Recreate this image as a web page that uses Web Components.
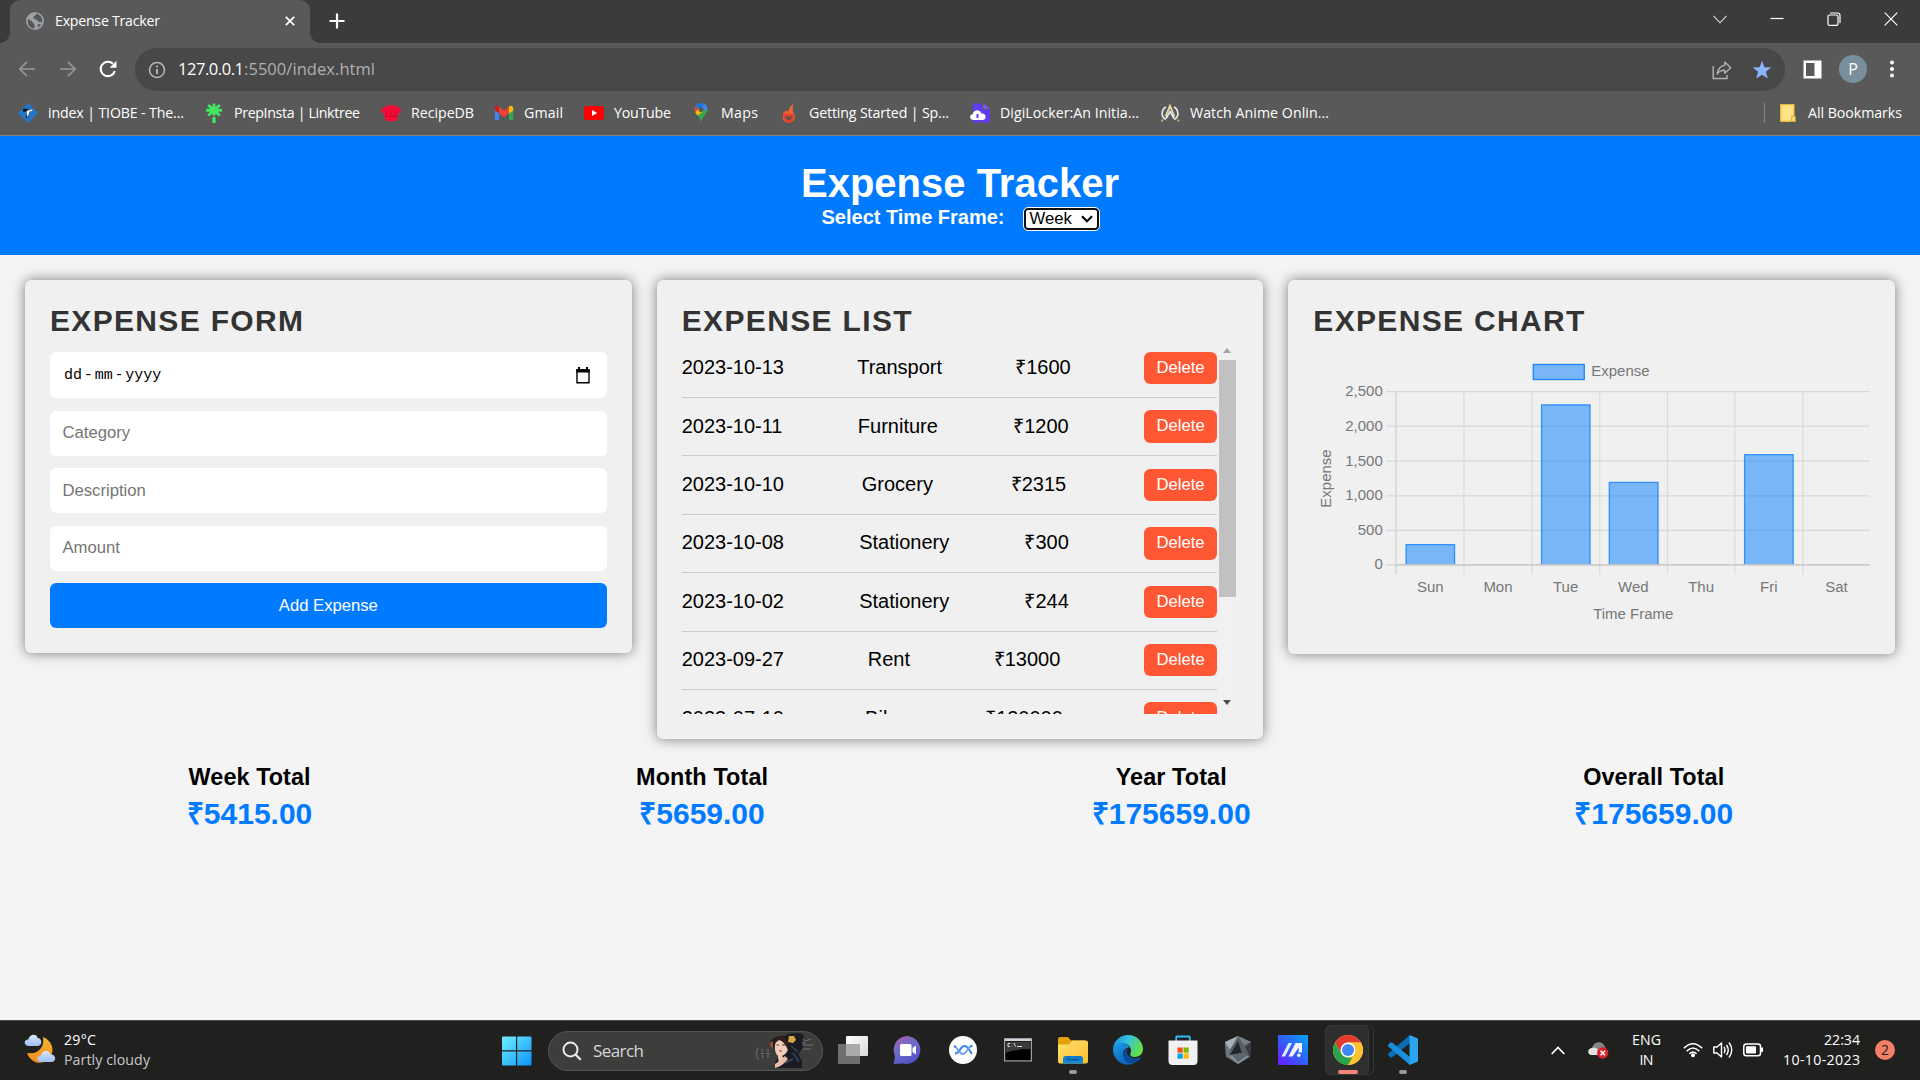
<!DOCTYPE html>
<html lang="en">
<head>
<meta charset="utf-8">
<title>Expense Tracker</title>
<style>
html,body{margin:0;padding:0;width:1920px;height:1080px;overflow:hidden}
</style>
</head>
<body>
<desktop-screen></desktop-screen>
<script>
const ICONS = {
globe:['0 0 18 18',`<circle cx="9" cy="9" r="9" fill="#9aa0a6"/><path d="M2 6.5 C3.500 9 6 8 6.500 10 C7 11.500 8.500 11.500 8.500 13.500 L8.500 16.500 C4 16.500 1 12.500 2 6.500Z M10.500 1.800 C10 4 7.500 3.800 7.500 5.500 C7.500 7.500 11.500 7.500 12 9 C12.500 10.500 15 9.500 16.200 10.500 C16.500 5.500 14 2.500 10.500 1.800Z M13 12 C11.500 12.500 11.500 14 12 15.300 C13.500 14.500 14.500 13.500 15 12.300Z" fill="#555"/>`],
x:['0 0 10 10',`<path d="M.8.8 9.200 9.200M9.200.8.8 9.200" stroke="#fff" stroke-width="1.700"/>`],
plus:['0 0 16 16',`<path d="M8 .5V15.500M.5 8H15.500" stroke="#fff" stroke-width="2.200"/>`],
chevThin:['0 0 14 9',`<path d="M.5.8 7 7.800 13.500.8" fill="none" stroke="#ddd" stroke-width="1.100"/>`],
min:['0 0 14 14',`<path d="M.5 6.500H13.500" stroke="#fff" stroke-width="1.200"/>`],
restore:['0 0 14 14',`<rect x="1" y="3" width="10" height="10.300" rx="1.600" fill="none" stroke="#fff" stroke-width="1.200"/><path d="M3 1 H10.500 Q13 1 13 3.500 V11" fill="none" stroke="#fff" stroke-width="1.200"/>`],
closeW:['0 0 14 14',`<path d="M.7.7 13.300 13.300M13.300.7.7 13.300" stroke="#fff" stroke-width="1.200"/>`],
back:['0 0 18 18',`<path d="M17 9H2M9 1.800 1.800 9 9 16.200" fill="none" stroke="#969696" stroke-width="1.700"/>`],
fwd:['0 0 18 18',`<path d="M1 9H16M9 1.800 16.200 9 9 16.200" fill="none" stroke="#969696" stroke-width="1.700"/>`],
reload:['0 0 18 18',`<path d="M15.800 11.200A7.200 7.200 0 1 1 14 3.800" fill="none" stroke="#fff" stroke-width="2.100"/><path d="M17.500.8V7.700H10.600Z" fill="#fff"/>`],
info:['0 0 18 18',`<circle cx="9" cy="9" r="7.500" fill="none" stroke="#b4b8bc" stroke-width="1.600"/><path d="M9 8V13" stroke="#b4b8bc" stroke-width="1.900"/><circle cx="9" cy="5.500" r="1.100" fill="#b4b8bc"/>`],
share:['0 0 20 20',`<path d="M1.200 6V18.500H15V15" fill="none" stroke="#b0b0b0" stroke-width="1.500"/><path d="M12.800 2 18.800 7.800 12.800 13.300V10.300C9.500 10.300 7.300 11 5 14C5.800 9.500 8.500 6 12.800 5.300Z" fill="none" stroke="#b0b0b0" stroke-width="1.400" stroke-linejoin="round"/>`],
star:['0 0 20 20',`<path d="M10 .8 12.400 7.200 19.300 7.500 13.900 11.800 15.800 18.500 10 14.700 4.200 18.500 6.100 11.800.7 7.500 7.600 7.200Z" fill="#8ab4f8"/>`],
panel:['0 0 19 19',`<path fill-rule="evenodd" d="M.5.500H18.500V18.500H.5Z M3 3V16H11.500V3Z" fill="#fff"/>`],
dots:['0 0 6 18',`<circle cx="3" cy="2.500" r="2" fill="#fff"/><circle cx="3" cy="9" r="2" fill="#fff"/><circle cx="3" cy="15.500" r="2" fill="#fff"/>`],
tiobe:['0 0 20 20',`<path d="M10 0 19.800 10 10 20 .2 10Z" fill="#2277cc"/><path d="M5 6 8 5.500 11 7 14.500 5.500 14 7.500 11.500 8.500 10.500 14 8 15 9 9 5 8.500Z" fill="#111"/><path d="M8.500 8 14.500 6 14 8 11.500 8.500 9.800 14.500 9 12Z" fill="#fff"/>`],
linktree:['0 0 20 20',`<path d="M10 .5V12.500M2 7.200H18M4.200 2 15.800 12.500M15.800 2 4.200 12.500" stroke="#43e660" stroke-width="2.900"/><path d="M10 14V20" stroke="#43e660" stroke-width="3.200"/>`],
recipe:['0 0 20 20',`<path d="M3 11C-1 9-.5 4.500 3.500 4.500C5 2 8 1.800 9.500 3C12 1.200 15.500 2.200 16.500 4.200C20.500 4.500 21 9.500 17 11V13H3Z M4 12.800H16.500V17C13 18.700 8 18.700 4 17Z" fill="#f40b35"/><path d="M5.500 9V13M10 8.500V13M14.500 9V13M4 13.500H16.500" stroke="#b30024" stroke-width=".6"/>`],
gmail:['0 0 20 20',`<path d="M.8 4.500V16Q.8 17 1.800 17H5V8Z" fill="#4285f4"/><path d="M19.200 4.500V16Q19.200 17 18.200 17H15V8Z" fill="#34a853"/><path d="M.8 7.500V5C.8 3 3 2 4.700 3.300L5 3.500V10.300Z" fill="#c5221f"/><path d="M15 3.500C17 1.800 19.200 3 19.200 5V7.500L15 10.600Z" fill="#fbbc04"/><path d="M5 3.500 10 7.400 15 3.500V10.600L10 14.300 5 10.600Z" fill="#ea4335"/>`],
youtube:['0 0 20 20',`<rect x="0" y="3" width="20" height="14" rx="3" fill="#f00"/><path d="M8 7 13.200 10 8 13Z" fill="#fff"/>`],
maps:['0 0 20 20',`<path d="M10 .3C13.800.3 16.500 3 16.500 6.600C16.500 11 11 13 10 19.700C9 13 3.500 11 3.500 6.600C3.500 3 6.200.3 10 .3Z" fill="#34a853"/><path d="M4.800 3 L8 6.500 4.300 9.300C3 7 3.500 4.500 4.800 3Z" fill="#ea4335"/><path d="M4.800 3C7 0 11 -.3 13.300 1.200L8 7Z" fill="#1a73e8"/><path d="M13.300 1.200C15.500 2.500 16.500 4.500 16.500 6.700L11.500 7 9 5.500Z" fill="#4285f4"/><path d="M4.300 9.300 8.300 5 12 8.500 6.500 12.500C5.500 11.500 4.700 10.300 4.300 9.300Z" fill="#fbbc04"/><circle cx="10" cy="6.500" r="2.500" fill="#5b5b5b"/>`],
flame:['0 0 20 20',`<path d="M14.500 .5C9.800 4 10.500 7 9 8.500C8 8.800 7.500 8 7.300 7C6.500 8.500 4.500 8.500 4 12C3.500 15.500 4 19.500 9.500 19.600C15.500 19.600 16.500 15 15.500 12C13.500 9 13 6 14.500 .5Z" fill="#f4642d"/><path d="M4 11.500C7 10 13 10 15.700 12.500L14 17.500C12 20.500 7.500 20.500 5.200 17Z" fill="#e5422f"/><path d="M6.200 13Q10 14.500 13.200 13Q12.500 17.500 9.500 16.800Q6.500 16.500 6.200 13Z" fill="#59514c"/>`],
digi:['0 0 20 20',`<path d="M3 .5H12V6.500H20V19.500H3Z" fill="#613cf2"/><path d="M13.200.5 20 5.700H13.200Z" fill="#7b5cf7"/><path d="M3.500 17C-1 17-.8 11.500 2.800 11C3.500 6.500 10 6 11.500 10.500C16.500 10 17 17 12.500 17Z" fill="#fff"/><path d="M7.500 11V15" stroke="#613cf2" stroke-width="2"/>`],
anime:['0 0 20 20',`<path d="M5.800 16.500C1 14 .8 7 6 4M14.200 16.500C19 14 19.200 7 14 4" fill="none" stroke="#e8e8e8" stroke-width="1.700"/><path d="M5.500 13.500 10 3 14.500 13.500" fill="none" stroke="#e8dba8" stroke-width="1.900"/><path d="M6 15.500 10 8.500 14 15.500" fill="none" stroke="#eee" stroke-width="1.600"/><path d="M1 16.500H3V18.500H1ZM17.300 16.500H19.300V18.500H17.300Z" fill="#cfae62"/>`],
folderY:['0 0 16 18',`<path d="M.6.600H14V13L15.300 17.400H.6Z" fill="#ffe389" stroke="#e5bb3a" stroke-width="1.200"/><path d="M11.800 12.200H15.200V17.400H11.800Z" fill="#ffe389" stroke="#d6a727"/>`],
calendar:['0 0 14 17',`<path d="M1 3H13V15.700H1Z" fill="none" stroke="#000" stroke-width="1.400"/><path d="M.3 2.200H13.700V5.500H.3ZM2 0H4V3H2ZM10 0H12V3H10Z"/>`],
weather:['0 0 32 32',`<defs><linearGradient id="m" x2="0" y2="1"><stop stop-color="#f2b92f"/><stop offset="1" stop-color="#f68a1e"/></linearGradient><linearGradient id="c" x2="0" y2="1"><stop stop-color="#d9e7fb"/><stop offset="1" stop-color="#9dbdf2"/></linearGradient></defs><path d="M19 4C31 9 32 24 20 29C13 31.500 6 28 3 20C13 22 21 15 19 4Z" fill="url(#m)"/><path d="M4 13C-1 12 0 6 4.500 6.500C5 1 13 0 13.500 5C18.500 5 18.500 12.500 14 13Z" fill="url(#c)"/><path d="M17 29C11.500 28.500 12.500 22.500 17 22.500C18 16.500 25.500 16.500 26.500 21.500C32 21 33 28.500 27.500 29Z" fill="url(#c)"/>`],
win:['0 0 30 30',`<defs><linearGradient id="w" x2="1" y2="1"><stop stop-color="#70efff"/><stop offset="1" stop-color="#0a93fb"/></linearGradient></defs><path d="M0 1.500Q0 .5 1 .5H14V14.300H0ZM15.200.500H28.500Q29.500.5 29.500 1.500V14.300H15.200ZM0 15.500H14V29.500H1Q0 29.500 0 28.500ZM15.200 15.500H29.500V28.500Q29.500 29.500 28.500 29.500H15.200Z" fill="url(#w)"/>`],
search:['0 0 20 20',`<circle cx="8.500" cy="8.500" r="7" fill="none" stroke="#ececf2" stroke-width="1.900"/><path d="M13.500 13.500 18.700 18.800" stroke="#ececf2" stroke-width="2.200"/>`],
portrait:['0 0 64 38',`<g fill="none" stroke="#777" stroke-width=".9"><path d="M8 16Q6 16 6 19Q6 22 4.500 22Q6 22 6 25Q6 27 8 27M11 17V20M10 21.500H13M11.500 23V26M17 17V20M15 21.500H19M17 23V26M51 11H55M50 9 52 7 54 9 60 7M50 13H62M51 17H60"/></g><path d="M19 10C21 6 26 4 34 4C40 0 52 0 53 4L51 10 52 16 47 22 51 29 51 36H24V30L28 24 24 18Z" fill="#1b1b23"/><path d="M25 9Q30 4 35 9L37 17Q36 22 31 24L34 28 28 33 27 24Q23 20 24 13Z" fill="#f1cdb8"/><path d="M24 32Q29 29 34 24L37 27Q32 34 24 36Z" fill="#e5bdab"/><path d="M23 12Q24 4 32 5Q39 8 37 18Q33 9 28 8Z" fill="#32211b"/><path d="M19 11 22 9 22 15 20 16Z" fill="#a8502e"/><path d="M38 4 43 4 45 8 42 11 37 10Z" fill="#d9a63f"/><path d="M40 14 47 20M42 21 48 30M34 31 42 27" stroke="#34475f" stroke-width="1.500"/><path d="M25.500 13H28M31 13H34" stroke="#59332a"/><path d="M28 19H31" stroke="#b44d43" stroke-width="1.200"/>`],
taskview:['0 0 30 28',`<defs><linearGradient id="tv" x2="1" y2="1"><stop stop-color="#fff"/><stop offset="1" stop-color="#d9d9d9"/></linearGradient></defs><rect x="8" y="0" width="22" height="20" rx="1" fill="url(#tv)"/><rect x="0" y="8" width="22" height="20" rx="1" fill="#7e7e7e" opacity=".85"/><rect x="8" y="8" width="14" height="12" fill="#aaa"/>`],
chat:['0 0 30 30',`<defs><linearGradient id="ch" x1=".2" x2=".7" y2="1"><stop stop-color="#a25fae"/><stop offset=".45" stop-color="#6a6dcc"/><stop offset="1" stop-color="#514dc5"/></linearGradient></defs><path d="M15 1A14 14 0 1 1 10 28.500L.8 29 2 21A14 14 0 0 1 15 1Z" fill="url(#ch)"/><rect x="7" y="9" width="11.500" height="12" rx="1.500" fill="#fff"/><path d="M19.500 13 23 10.500V19.500L19.500 17Z" fill="#fff"/>`],
wave:['0 0 28 28',`<circle cx="14" cy="14" r="14" fill="#fff"/><path d="M6 17.500C11 17.500 11 10 15.500 10C18.500 10 19.500 13 23 18" fill="none" stroke="#3c83f2" stroke-width="2"/><path d="M5.500 10.500C9 11.500 10 18 14 18C18 18 18 11 22.500 10" fill="none" stroke="#6aa0f7" stroke-width="1.800"/><circle cx="6" cy="10.500" r="1.200" fill="#3c83f2"/><circle cx="22.500" cy="10" r="1.200" fill="#3c83f2"/>`],
terminal:['0 0 28 24',`<rect x=".6" y=".6" width="26.800" height="22.300" fill="#000" stroke="#9aa1a8" stroke-width="1.200"/><path d="M1 1H27V3H1Z" fill="#d0d4d8"/><path d="M1.500 3.500H26.500V11Q12 11 1.500 15Z" fill="#3a3a3a"/><path d="M6 5.500H4V8.500H6M8 5.500V6M8 8V8.500M10 5 11.500 8.500M13 8.500H18" stroke="#ddd" stroke-width="1" fill="none"/>`],
folder:['0 0 30 30',`<defs><linearGradient id="fo" x2="1" y2="1"><stop stop-color="#ffe06f"/><stop offset="1" stop-color="#fbc02c"/></linearGradient><linearGradient id="fb" x2="0" y2="1"><stop stop-color="#0b74c5"/><stop offset="1" stop-color="#0f93dc"/></linearGradient></defs><path d="M0 4Q0 2 2 2H10L13 5.500H27V12H0Z" fill="#e3a008"/><path d="M0 9.500H11L14 5.500H28Q30 5.500 30 7.500V26.500Q30 28.500 28 28.500H2Q0 28.500 0 26.500Z" fill="url(#fo)"/><path d="M5 28.500V24Q5 21 8 21H22Q25 21 25 24V28.500Z" fill="url(#fb)"/><path d="M9 24.700H21.500" stroke="#0b4f8e" stroke-width="1.300"/>`],
edge:['0 0 30 30',`<defs><linearGradient id="e1" x2="1" y2=".4"><stop stop-color="#1687d0"/><stop offset=".5" stop-color="#35c1df"/><stop offset="1" stop-color="#60e04b"/></linearGradient><linearGradient id="e2" x2=".5" y2="1"><stop stop-color="#1c9de4"/><stop offset="1" stop-color="#0c62bb"/></linearGradient></defs><path d="M0 13A15 15 0 0 1 15 0C25 0 30 8 30 14C30 19 26 22 21.500 22C18 22 16.500 20 17.500 18.500C19.500 14 16 8 9 8C5 8 2 10 0 13Z" fill="url(#e1)"/><path d="M0 15C0 8 7 6.500 11 8C15 9.500 17 12 15 13C11 13 9 18 11 22C13 27 18 29 22 28A15 15 0 0 1 0 15Z" fill="url(#e2)"/><path d="M14.500 13C10 15 9 21 13 25.500C17 29.500 22 28.500 25 26.200C27 24.500 28.500 22.500 28 22C27.500 21.500 25 24 20 23C14 21.500 13 17 14.500 13Z" fill="#0b4c96"/>`],
store:['0 0 30 30',`<path d="M8.200 6.500V2.300Q8.200 1.500 9 1.500H21Q21.800 1.500 21.800 2.300V6.500" fill="none" stroke="#35bdf3" stroke-width="1.800"/><path d="M.5 5.500H29.500V26Q29.500 30 25.500 30H4.500Q.5 30 .5 26Z" fill="#f1f1f1"/><path d="M9.500 12.500H14.700V17.700H9.500Z" fill="#f25022"/><path d="M15.500 12.500H20.700V17.700H15.500Z" fill="#7fba00"/><path d="M9.500 18.500H14.700V23.700H9.500Z" fill="#00a4ef"/><path d="M15.500 18.500H20.700V23.700H15.500Z" fill="#ffb900"/>`],
hex:['0 0 28 30',`<path d="M14 1 27 7 26 22 14 29 2 22 1 7Z" fill="#59636b"/><path d="M14 1 10 8 3 19 1 7Z" fill="#a9b0b5"/><path d="M14 1 27 7 20 10Z" fill="#777f87"/><path d="M1 7 6 15 4 22 2 22Z" fill="#6e777f"/><path d="M14 6 6 20 18 18Z" fill="#22272a"/><path d="M14 3 25 21 18 18Z" fill="#555e66"/><path d="M4 21 18 18 25 21.500 14 29Z" fill="#8a939a"/><path d="M8 20.500 18 18 23 20.500 14 27Z" fill="#5b646b"/><path d="M27 7 26 22 21 12Z" fill="#343b41"/>`],
armoury:['0 0 30 30',`<defs><linearGradient id="ar" x1="1" x2="0" y2="1"><stop stop-color="#00a6ff"/><stop offset=".5" stop-color="#3260fa"/><stop offset="1" stop-color="#6b17ff"/></linearGradient></defs><path d="M0 0H30V30H0Z" fill="url(#ar)"/><path d="M3.500 21.500 10.500 8H14L7 21.500Z" fill="#dfe8ff"/><path d="M10.500 21.500 17.500 8H24V17.500L20.700 17.500V12.500L14.500 21.500Z" fill="#f2f5ff"/><circle cx="20.800" cy="20.200" r="1.700" fill="#fff"/>`],
chrome:['0 0 30 30',`<circle cx="15" cy="15" r="15" fill="#fcc934"/><path d="M2.010 7.500A15 15 0 0 1 27.990 7.500H15L8.500 18.750Z" fill="#e33b2e"/><path d="M2.010 7.500 8.500 18.750 15 22.500H21.500L15 30A15 15 0 0 1 2.010 7.500Z" fill="#2ba24c"/><path d="M21.500 18.750 15 30A15 15 0 0 0 27.990 7.500H15Z" fill="#fcc32c"/><circle cx="15" cy="15" r="7.500" fill="#fff"/><circle cx="15" cy="15" r="6" fill="#4285f4"/>`],
vscode:['0 0 30 30',`<path d="M22 0 22 8 4 22.500 2.500 22.500 0 20 0 18.800Z" fill="#0a6fb8"/><path d="M22 30V22L4 7.500H2.500L0 10V11.200Z" fill="#1b8fdb"/><path d="M21.500 0 30 3.500V26.500L21.500 30Z" fill="#2aa5ee"/>`],
up:['0 0 14 9',`<path d="M.7 8 7 1.500 13.300 8" fill="none" stroke="#fff" stroke-width="1.700"/>`],
cloud:['0 0 21 18',`<path d="M4 14C-1 14-1 7.500 4 7C6-.5 15 0 16.500 5Q18 7 17 10L10 14Z" fill="#858585"/><path d="M4 14C-1 14-1 7.500 4 7Q8 5 11 10L12 14Z" fill="#e4e4e4"/><circle cx="14.700" cy="12" r="5.700" fill="#d9242d"/><path d="M12.500 9.800 17 14.200M17 9.800 12.500 14.200" stroke="#fff" stroke-width="1.500"/>`],
wifi:['0 0 20 16',`<g fill="none" stroke="#fff" stroke-width="1.500"><path d="M.8 6.300Q10-3 19.200 6.300M3.600 9.200Q10 2.600 16.400 9.200M6.400 11.800Q10 8 13.600 11.800"/></g><circle cx="10" cy="13.200" r="2" fill="#fff"/>`],
speaker:['0 0 20 18',`<g fill="none" stroke="#fff" stroke-width="1.400"><path d="M.8 6H4L8.500 2V16L4 12H.8Z" stroke-linejoin="round"/><path d="M11 6Q13 9 11 12M13.500 4Q17 9 13.500 14M16 1.500Q21.500 9 16 16.500"/></g>`],
battery:['0 0 20 14',`<rect x=".8" y="1" width="16.700" height="11.700" rx="2.500" fill="none" stroke="#fff" stroke-width="1.500"/><rect x="3" y="3.300" width="10" height="7.200" rx=".8" fill="#fff"/><path d="M18 4.500H20V9H18Z" fill="#fff"/>`],
down:['0 0 12 8',`<path d="M1 1.200 6 6.200 11 1.200" fill="none" stroke="#000" stroke-width="2.200"/>`]
};

/* define a component from its shadow markup */
function component(name, markup, setup){
  const t=document.createElement('template'); t.innerHTML=markup;
  customElements.define(name, class extends HTMLElement{
    connectedCallback(){
      if(this.shadowRoot) return;
      this.attachShadow({mode:'open'}).append(t.content.cloneNode(true));
      if(setup) setup.call(this,this.shadowRoot);
    }
  });
}

customElements.define('ui-icon', class extends HTMLElement{
  connectedCallback(){
    if(this.shadowRoot) return;
    const [vb,body]=ICONS[this.getAttribute('name')], [,,w,h]=vb.split(' ');
    this.attachShadow({mode:'open'}).innerHTML=
      `<style>:host{display:block;flex:none;width:${w}px;height:${h}px}svg{display:block}</style><svg width="${w}" height="${h}" viewBox="${vb}">${body}</svg>`;
  }
});

/* single line of text tracked to an exact advance width */
customElements.define('fit-text', class extends HTMLElement{
  connectedCallback(){
    if(this.shadowRoot) return;
    const w=+this.getAttribute('w');
    this.attachShadow({mode:'open'}).innerHTML=
      `<style>:host{display:block;flex:none;width:${w}px;white-space:nowrap}span{display:inline-block}</style><span><slot></slot></span>`;
    const s=this.shadowRoot.querySelector('span');
    const n=this.textContent.length, nat=s.getBoundingClientRect().width;
    if(nat) s.style.letterSpacing=((w-nat)/(n-1)).toFixed(3)+'px';
  }
});

component('browser-tabs',`<style>
:host{display:flex;height:43px;background:#3b3b3b;align-items:flex-start;color:#fff;font:14.200px/20px "Open Sans",sans-serif}
.tab{box-sizing:border-box;width:300px;height:43px;margin-left:10px;background:#595959;border-radius:10px 10px 0 0;display:flex;padding:12px 15px 0 16px;position:relative}
.tab::before,.tab::after{content:"";position:absolute;bottom:0;width:10px;height:10px}
.tab::before{left:-10px;background:radial-gradient(circle at 0 0,#3b3b3b 9.500px,#595959 10px)}
.tab::after{right:-10px;background:radial-gradient(circle at 100% 0,#3b3b3b 9.500px,#595959 10px)}
fit-text{margin:-1px 0 0 11px}.tab .c{margin:4px 0 0 auto}
.plus{margin:13px 0 0 19px}.win{display:flex;margin:12px 22px 0 auto;gap:43px;align-items:center;height:14px}
</style><div class="tab"><ui-icon name="globe"></ui-icon><fit-text w="105">Expense Tracker</fit-text><ui-icon class="c" name="x"></ui-icon></div><ui-icon class="plus" name="plus"></ui-icon>
<div class="win"><ui-icon name="chevThin"></ui-icon><ui-icon name="min"></ui-icon><ui-icon name="restore"></ui-icon><ui-icon name="closeW"></ui-icon></div>`);

component('address-bar',`<style>
:host{display:flex;height:53px;background:#595959;align-items:center;box-sizing:border-box;padding:0 24px 0 18px;font:16.500px/24px "Open Sans",sans-serif}
.nav{display:flex;gap:22.500px;width:117px;margin-top:-1px}
.box{display:flex;align-items:center;width:1650px;height:43px;border-radius:22px;background:#484848;box-sizing:border-box;padding:0 13px 0 13px;color:#fff}
.box fit-text{margin-top:-1px}
.box .i{margin-right:12px}.g{color:#b0b0b0}
.s{margin:0 20px 0 auto}.p{margin:-1px 17px 0 18px}
.av{width:28px;height:28px;border-radius:50%;background:#78909c;color:#fff;text-align:center;font:16px/28px "Open Sans",sans-serif;margin:-1px 22px 0 0}
.k{margin-top:-1px}
</style><div class="nav"><ui-icon name="back"></ui-icon><ui-icon name="fwd"></ui-icon><ui-icon name="reload"></ui-icon></div>
<div class="box"><ui-icon class="i" name="info"></ui-icon><fit-text w="66">127.0.0.1</fit-text><fit-text class="g" w="131">:5500/index.html</fit-text><ui-icon class="s" name="share"></ui-icon><ui-icon name="star"></ui-icon></div>
<ui-icon class="p" name="panel"></ui-icon><div class="av">P</div><ui-icon class="k" name="dots"></ui-icon>`);

component('book-mark',`<style>:host{display:flex;align-items:center;flex:none;gap:10px}</style><slot></slot>`,function(r){
  const i=document.createElement('ui-icon');
  i.setAttribute('name',this.getAttribute('icon'));
  r.querySelector('slot').before(i);
  this.style.width=this.getAttribute('w')+'px';
});
component('bookmarks-bar',`<style>
:host{display:flex;height:40px;background:#595959;border-bottom:1px solid #858585;box-sizing:border-box;padding:0 18px 6px 18px;align-items:center;color:#fff;font:14.200px/20px "Open Sans",sans-serif}
.sep{width:1px;height:20px;background:#858585;margin-left:auto}.f{margin:0 12px 0 15px}
</style><book-mark icon="tiobe" w="186"><fit-text w="136">index | TIOBE - The...</fit-text></book-mark><book-mark icon="linktree" w="177"><fit-text w="126">PrepInsta | Linktree</fit-text></book-mark><book-mark icon="recipe" w="113"><fit-text w="63">RecipeDB</fit-text></book-mark><book-mark icon="gmail" w="90"><fit-text w="39">Gmail</fit-text></book-mark><book-mark icon="youtube" w="107"><fit-text w="57">YouTube</fit-text></book-mark><book-mark icon="maps" w="88"><fit-text w="37">Maps</fit-text></book-mark><book-mark icon="flame" w="191"><fit-text w="140">Getting Started | Sp...</fit-text></book-mark><book-mark icon="digi" w="190"><fit-text w="139">DigiLocker:An Initia...</fit-text></book-mark><book-mark icon="anime" w="170"><fit-text w="139">Watch Anime Onlin...</fit-text></book-mark><div class="sep"></div><ui-icon class="f" name="folderY"></ui-icon><fit-text w="94">All Bookmarks</fit-text>`);

component('page-header',`<style>
:host{display:flex;flex-direction:column;align-items:center;box-sizing:border-box;height:119px;padding-top:24px;background:#007bff;color:#fff;font-family:"Liberation Sans",Arial,sans-serif;font-weight:bold}
h1{margin:0;font-size:40px;line-height:46px}
.row{display:flex;height:24px;font-size:20px;line-height:23px}
.sel{display:flex;align-items:center;justify-content:space-between;box-sizing:border-box;width:75px;height:22px;margin:1.500px 0 0 19px;border:2px solid #101010;border-radius:4px;outline:1px solid #fff;background:#fff;color:#000;font:16.670px/18px "Liberation Sans",sans-serif;padding:0 4px}
</style><h1><fit-text w="318">Expense Tracker</fit-text></h1><div class="row"><fit-text w="183">Select Time Frame:</fit-text><div class="sel"><span>Week</span><ui-icon name="down"></ui-icon></div></div>`);

component('panel-card',`<style>
:host{display:block;box-sizing:border-box;padding:25px;background:#f0f0f0;border-radius:6.250px;box-shadow:0 0 12.500px rgba(0,0,0,.5)}
h2{margin:0;color:#333;font-size:30px;line-height:32px;padding-bottom:2px;text-transform:uppercase}
</style><h2><slot name="title"></slot></h2><slot></slot>`);

component('expense-form',`<style>
:host{display:flex;flex-direction:column;gap:12.500px;padding-top:13px;font-size:16.670px}
.f,.b{box-sizing:border-box;height:45px;border-radius:6.250px;background:#fff;color:#757575;padding:0 12.500px;display:flex;align-items:center}
.d{height:46px;color:#000;font:15px "Liberation Mono",monospace;padding:0 17px 0 14px;justify-content:space-between}
.d div{display:flex;gap:1.800px}
.b{background:#007bff;color:#fff;justify-content:center}
</style><div class="f d"><div><span>dd</span><span>-</span><span>mm</span><span>-</span><span>yyyy</span></div><ui-icon name="calendar"></ui-icon></div><div class="f">Category</div><div class="f">Description</div><div class="f">Amount</div><div class="b">Add Expense</div>`);

component('expense-row',`<style>
:host{display:flex;justify-content:space-between;align-items:center;height:32.400px;padding:12.500px 0;border-bottom:1px solid #ccc;font-size:20px;line-height:23px}
span{margin-top:-1px}
b{font:16.670px/31px "Liberation Sans",sans-serif;height:32.400px;padding:0 12.500px;border-radius:6.250px;background:#ff5733;color:#fff}
</style><span class="a"></span><span class="c"></span><span class="m"></span><b>Delete</b>`,function(r){
  for(const [k,a] of [['.a','date'],['.c','category'],['.m','amount']]) r.querySelector(k).textContent=this.getAttribute(a);
});
component('expense-list',`<style>
:host{display:flex;height:375px;overflow:hidden}
.rows{width:535.500px;flex:none;padding-top:.6px}
.bar{width:19px;background:#f1f1f1;display:flex;flex-direction:column;align-items:center;box-sizing:border-box;padding:9px 0 9px 1px}
.u,.d{border:4.500px solid transparent;width:0;height:0}
.u{border-top:0;border-bottom:5px solid #a3a3a3}.d{border-bottom:0;border-top:5px solid #505050;margin-top:auto}
.t{width:17px;height:237px;background:#c1c1c1;margin-top:7px}
</style><div class="rows"></div><div class="bar"><div class="u"></div><div class="t"></div><div class="d"></div></div>`,function(r){
  for(const [d,c,a] of [['2023-10-13','Transport','₹1600'],['2023-10-11','Furniture','₹1200'],['2023-10-10','Grocery','₹2315'],['2023-10-08','Stationery','₹300'],['2023-10-02','Stationery','₹244'],['2023-09-27','Rent','₹13000'],['2023-07-10','Bike','₹120000']]){
    const e=document.createElement('expense-row');
    e.setAttribute('date',d);e.setAttribute('category',c);e.setAttribute('amount',a);
    r.querySelector('.rows').append(e);
  }
});

component('expense-chart',`<style>:host{display:block;height:290px}svg{display:block}text{font:15px "Liberation Sans",sans-serif;fill:#777}</style><svg width="556.670" height="290" viewBox="1312.730 339 556.670 290"></svg>`,function(r){
  let s='';
  const xs=[1395.6,1463.7,1531.6,1599.4,1667.2,1734.6,1802.5], ys=[391.5,426.2,461,495.8,530.5,564.8];
  xs.forEach((x,i)=>{s+=`<path d="M${x} 391V574.500" stroke="${i?'#dcdcdc':'#cfcfcf'}" stroke-width="1.250"/>`});
  ys.forEach((y,i)=>{s+=`<path d="M1386 ${y}H1869.400" stroke="#d8d8d8" stroke-width="1.250"/><text x="1382.500" y="${y+4.7}" text-anchor="end">${['2,500','2,000','1,500','1,000','500','0'][i]}</text>`});
  for(const [x,w,y] of [[1405.8,48.5,544.6],[1541.3,48.5,404.8],[1609,48.8,482.4],[1744.3,48.6,454.7]])
    s+=`<path d="M${x} 564.500V${y}H${x+w}V564.500Z" fill="#007bff" fill-opacity=".5"/><path d="M${x} 564.500V${y}H${x+w}V564.500" fill="none" stroke="#007bff" stroke-opacity=".75" stroke-width="1.250"/>`;
  s+='<path d="M1395.600 564.800H1869.400" stroke="#c4c4c4" stroke-width="1.250"/>';
  ['Sun','Mon','Tue','Wed','Thu','Fri','Sat'].forEach((t,i)=>{s+=`<text x="${1430+i*67.7}" y="592" text-anchor="middle">${t}</text>`});
  s+=`<rect x="1533" y="364.500" width="51" height="15" fill="#79b5f7" stroke="#1687fb" stroke-width="1.300"/><text x="1591" y="375.800">Expense</text><text x="1633" y="619" text-anchor="middle">Time Frame</text><text transform="translate(1331 478.500) rotate(-90)" text-anchor="middle">Expense</text>`;
  r.querySelector('svg').innerHTML=s;
});

component('total-item',`<style>:host{display:flex;flex-direction:column;align-items:center;gap:6px;font-weight:bold}
.l{font-size:23.400px;line-height:27px;color:#000}.v{font-size:30px;line-height:33px;color:#007bff}</style><div class="l"><slot></slot></div><div class="v"><slot name="value"></slot></div>`);

component('expense-page',`<style>
:host{display:flex;flex-direction:column;flex:1;background:#f4f4f4;font-family:"Liberation Sans",Arial,sans-serif}
.grid{display:grid;grid-template-columns:repeat(3,1fr);gap:25px;padding:25px 25px 0;align-items:start}
.tot{display:flex;justify-content:space-around;padding:24.500px 25px 0}
</style><page-header></page-header><div class="grid"><panel-card><fit-text slot="title" w="253">Expense Form</fit-text><expense-form></expense-form></panel-card><panel-card><fit-text slot="title" w="230">Expense List</fit-text><expense-list></expense-list></panel-card><panel-card><fit-text slot="title" w="271">Expense Chart</fit-text><expense-chart></expense-chart></panel-card></div>
<div class="tot"><total-item><fit-text w="122">Week Total</fit-text><span slot="value">₹5415.00</span></total-item><total-item><fit-text w="132">Month Total</fit-text><span slot="value">₹5659.00</span></total-item><total-item><fit-text w="111">Year Total</fit-text><span slot="value">₹175659.00</span></total-item><total-item><fit-text w="141">Overall Total</fit-text><span slot="value">₹175659.00</span></total-item></div>`);

component('task-app',`<style>:host{display:flex;flex-direction:column;align-items:center;justify-content:center;width:55px;height:60px;flex:none;position:relative}
i{position:absolute;top:50px;width:8px;height:4px;border-radius:2px;background:#999}
:host([active]) i{width:20px;background:#f48771}:host(:not([open]):not([active])) i{display:none}
:host([active])::before{content:"";position:absolute;left:5px;top:5px;width:44px;height:50px;box-sizing:border-box;border-radius:6px;background:#2f2f2f;border:1px solid #3a3a3a}
:host([active])::after{content:"";position:absolute;left:42px;top:5px;width:12px;height:50px;box-sizing:border-box;border:1px solid #353535;border-left:0;border-radius:0 6px 6px 0}
.x{position:relative}</style><div class="x"><slot></slot></div><i></i>`);

component('task-bar',`<style>
:host{display:flex;height:60px;box-sizing:border-box;border-top:1px solid #4a4a4a;background:#20201f;color:#fff;font:14.200px/20px "Open Sans",sans-serif;align-items:center}
.w{display:flex;width:478px;padding-left:24px;gap:8px;align-items:center}.w .g{color:#c9c9c9}
.w div{margin-top:-2px}
.wi{margin:-4px 0 0}
.sb{display:flex;align-items:center;box-sizing:border-box;width:275px;height:40px;margin:0 2px 0 16px;border:1px solid #555;border-radius:20px;background:#3d3d3c;padding:0 7px 0 13px;color:#d6d6d6;font-size:17px}
.sb fit-text{margin-left:11px;line-height:24px}.pt{margin-left:auto}
.apps{display:flex;margin-top:-1px}.sp{flex:1}
.tray{display:flex;align-items:center;margin-top:-1px}
.col{display:flex;flex-direction:column;align-items:center;margin-top:-1px}.r{align-items:flex-end}
.n{width:20px;height:20px;border-radius:50%;background:#f47f67;color:#222;text-align:center;font-size:14px;line-height:20px;margin:0 25px 0 15px}
</style><div class="w"><ui-icon class="wi" name="weather"></ui-icon><div><fit-text w="32">29°C</fit-text><fit-text class="g" w="86">Partly cloudy</fit-text></div></div>
<ui-icon name="win"></ui-icon><div class="sb"><ui-icon name="search"></ui-icon><fit-text w="51">Search</fit-text><ui-icon class="pt" name="portrait"></ui-icon></div>
<div class="apps"><task-app><ui-icon name="taskview"></ui-icon></task-app><task-app><ui-icon name="chat"></ui-icon></task-app><task-app><ui-icon name="wave"></ui-icon></task-app><task-app><ui-icon name="terminal"></ui-icon></task-app><task-app open><ui-icon name="folder"></ui-icon></task-app><task-app><ui-icon name="edge"></ui-icon></task-app><task-app><ui-icon name="store"></ui-icon></task-app><task-app><ui-icon name="hex"></ui-icon></task-app><task-app><ui-icon name="armoury"></ui-icon></task-app><task-app active><ui-icon name="chrome"></ui-icon></task-app><task-app open><ui-icon name="vscode"></ui-icon></task-app></div><div class="sp"></div>
<div class="tray"><ui-icon name="up"></ui-icon><ui-icon name="cloud" style="margin-left:23px"></ui-icon><div class="col" style="margin-left:23px"><fit-text w="29">ENG</fit-text><fit-text w="14">IN</fit-text></div><ui-icon name="wifi" style="margin-left:22px"></ui-icon><ui-icon name="speaker" style="margin-left:10px"></ui-icon><ui-icon name="battery" style="margin-left:10px"></ui-icon><div class="col r" style="margin-left:20px"><fit-text w="36">22:34</fit-text><fit-text w="77">10-10-2023</fit-text></div><div class="n">2</div></div>`);

component('desktop-screen',`<style>:host{display:flex;flex-direction:column;width:1920px;height:1080px;overflow:hidden}</style><browser-tabs></browser-tabs><address-bar></address-bar><bookmarks-bar></bookmarks-bar><expense-page></expense-page><task-bar></task-bar>`);
</script>
</body>
</html>
